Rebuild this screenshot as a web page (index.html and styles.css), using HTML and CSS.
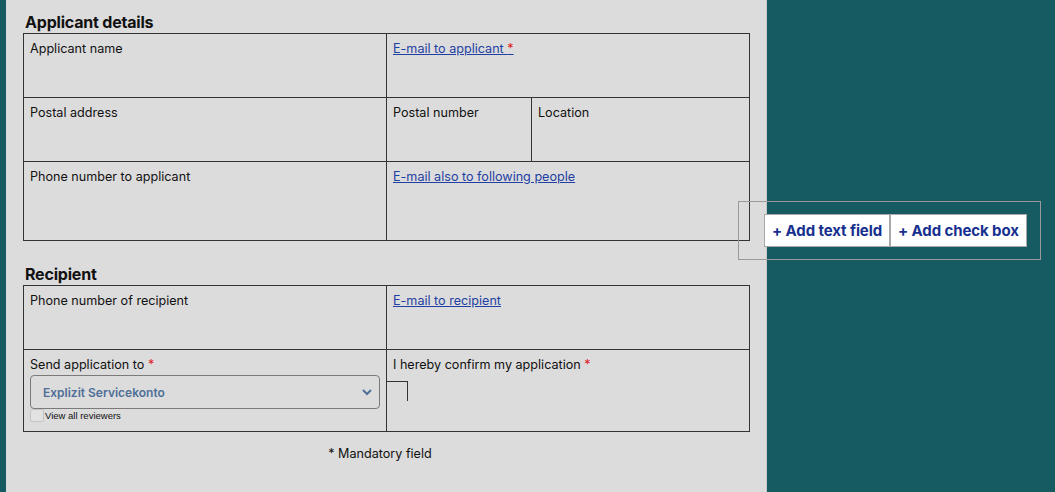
FILE: index.html
```html
<!DOCTYPE html>
<html lang="en">

<head>
    <meta charset="UTF-8">
    <title>Application form</title>
    <link rel="stylesheet" href="styles.css">
</head>

<body>
    <div class="page">
        <div class="form-panel">
            <h2 class="section-title">Applicant details</h2>
            <table class="form-table">
                <colgroup>
                    <col class="col-left">
                    <col class="col-mid">
                    <col class="col-right">
                </colgroup>
                <tr class="row-short">
                    <td>Applicant name</td>
                    <td colspan="2"><a href="#">E-mail to applicant <span class="req">*</span></a></td>
                </tr>
                <tr class="row-short">
                    <td>Postal address</td>
                    <td>Postal number</td>
                    <td>Location</td>
                </tr>
                <tr class="row-tall">
                    <td>Phone number to applicant</td>
                    <td colspan="2"><a href="#">E-mail also to following people</a></td>
                </tr>
            </table>

            <h2 class="section-title second">Recipient</h2>
            <table class="form-table">
                <colgroup>
                    <col class="col-left">
                    <col class="col-mid">
                    <col class="col-right">
                </colgroup>
                <tr class="row-short">
                    <td>Phone number of recipient</td>
                    <td colspan="2"><a href="#">E-mail to recipient</a></td>
                </tr>
                <tr class="row-send">
                    <td class="send-cell">
                        Send application to <span class="req">*</span>
                        <div class="select-box">
                            <span>Explizit Servicekonto</span>
                            <svg width="12" height="8" viewBox="0 0 12 8"><path d="M2 2l4 4 4-4" fill="none" stroke="#4f6f98" stroke-width="2"/></svg>
                        </div>
                        <label class="reviewers"><span class="check"></span>View all reviewers</label>
                    </td>
                    <td colspan="2" class="confirm-cell">
                        I hereby confirm my application <span class="req">*</span>
                        <div class="confirm-box"></div>
                    </td>
                </tr>
            </table>

            <p class="mandatory">* Mandatory field</p>
        </div>
    </div>

    <div class="add-tools">
        <button class="add-btn">+ Add text field</button><button class="add-btn">+ Add check box</button>
    </div>
</body>

</html>
```

FILE: styles.css
```css
body {
    margin: 0;
    background: #165a62;
    font-family: Inter, "Noto Sans", sans-serif;
    color: #111;
    height: 492px;
    overflow: hidden;
}

.page {
    display: flex;
    height: 100%;
}

.form-panel {
    margin-left: 6px;
    width: 761px;
    border-right: 1px solid #c8c8c8;
    background: #dcdcdc;
    padding: 12px 0 0 17px;
    box-sizing: border-box;
}

.section-title {
    margin: 0 0 1px 2px;
    font-size: 16px;
    font-weight: 700;
    line-height: 20px;
    letter-spacing: -0.2px;
}

.section-title.second {
    margin-top: 23px;
}

.form-table {
    border-collapse: collapse;
    table-layout: fixed;
    width: 726px;
    font-size: 12.6px;
}

.col-left { width: 363px; }
.col-mid { width: 145px; }
.col-right { width: 218px; }

.form-table td {
    border: 1px solid #333;
    vertical-align: top;
    padding: 7px 6px 0 6px;
    line-height: 15px;
}

.row-short { height: 64px; }
.row-tall { height: 79px; }
.row-send { height: 82px; }

.form-table a {
    color: #1f3fa3;
    text-decoration: underline;
}

.req {
    color: #e0191b;
}

.select-box {
    margin-top: 3px;
    height: 34px;
    border: 1px solid #7a7a7a;
    border-radius: 4px;
    display: flex;
    align-items: center;
    justify-content: space-between;
    padding: 0 6px 0 12px;
    box-sizing: border-box;
    font-size: 12px;
    font-weight: 600;
    color: #4f6f98;
}

.reviewers {
    display: flex;
    align-items: center;
    font-family: "Liberation Sans", Arial, sans-serif;
    font-size: 9.5px;
    line-height: 12px;
    color: #111;
}

.check {
    width: 12px;
    height: 11px;
    border: 1px solid #c4c4c4;
    border-radius: 2px;
    background: #e2e2e2;
    margin-right: 1px;
}

.confirm-box {
    margin: 9px 0 0 -6px;
    width: 20px;
    height: 19px;
    border-top: 1px solid #333;
    border-right: 1px solid #333;
}

.mandatory {
    margin: 14px 0 0 0;
    width: 714px;
    text-align: center;
    font-size: 12.6px;
}

.add-tools {
    position: absolute;
    left: 738px;
    top: 201px;
    width: 303px;
    height: 59px;
    border: 1px solid #9a9a9a;
    box-sizing: border-box;
    padding: 12px 0 0 25px;
    display: flex;
    align-items: flex-start;
}

.add-btn {
    height: 33px;
    background: #fff;
    border: 1px solid #a8a8a8;
    margin: 0;
    padding: 0 7px;
    font-family: Inter, "Noto Sans", sans-serif;
    font-size: 15px;
    font-weight: 700;
    color: #17308f;
    letter-spacing: -0.1px;
}
```
